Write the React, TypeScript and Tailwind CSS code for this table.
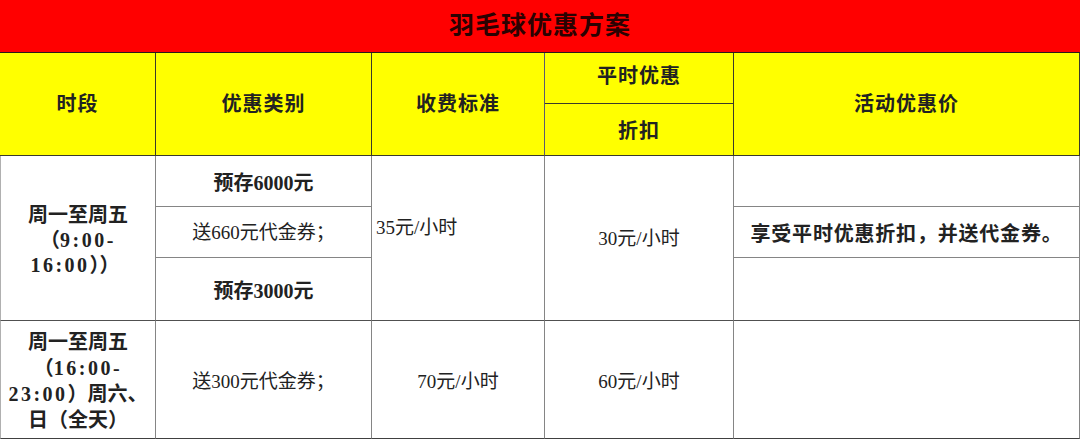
import React from "react";

const hb = "border-r border-b border-[#3a3a2a]";
const bb = "border-r border-b border-[#858585]";
const ctr = "flex items-center justify-center text-center";

export default function App() {
  return (
    <div
      className="w-[1080px] h-[440px] bg-white overflow-hidden"
      style={{ fontFamily: '"Liberation Serif", "Noto Sans CJK SC", serif' }}
    >
      <div className="grid grid-cols-[156px_216px_173px_189px_346px] grid-rows-[53px_51px_52px_51px_51px_63px_118px] text-[#222]">
        {/* title */}
        <div className={`col-start-1 col-span-5 row-start-1 bg-[#ff0000] border-b border-[#2a1a1a] ${ctr} text-[25px] font-bold tracking-[1px] text-[#2a0202]`}>
          羽毛球优惠方案
        </div>

        {/* header */}
        <div className={`col-start-1 row-start-2 row-span-2 bg-[#ffff00] ${hb} ${ctr} text-[20px] font-bold tracking-[1px]`}>时段</div>
        <div className={`col-start-2 row-start-2 row-span-2 bg-[#ffff00] ${hb} ${ctr} text-[20px] font-bold tracking-[1px]`}>优惠类别</div>
        <div className={`col-start-3 row-start-2 row-span-2 bg-[#ffff00] ${hb} border-r-[#5a5a70] ${ctr} text-[20px] font-bold tracking-[1px]`}>收费标准</div>
        <div className={`col-start-4 row-start-2 bg-[#ffff00] ${hb} ${ctr} text-[20px] font-bold tracking-[1px] pb-[4px]`}>平时优惠</div>
        <div className={`col-start-4 row-start-3 bg-[#ffff00] ${hb} ${ctr} text-[20px] font-bold tracking-[1px] pt-[3px]`}>折扣</div>
        <div className={`col-start-5 row-start-2 row-span-2 bg-[#ffff00] ${hb} ${ctr} text-[20px] font-bold tracking-[1px]`}>活动优惠价</div>

        {/* body row 1 */}
        <div className={`col-start-1 row-start-4 row-span-3 border-l border-l-[#b0b0b0] ${bb} border-b-[#505050] ${ctr} text-[20px] font-bold leading-[25px] pt-[4px]`}>
          <div>
            周一至周五
            <br />
            （<span className="tracking-[2.5px]">9:00-</span>
            <br />
            <span className="pr-[6px]">
              <span className="tracking-[2.5px]">16:00</span>））
            </span>
          </div>
        </div>
        <div className={`col-start-2 row-start-4 ${bb} ${ctr} text-[20px] font-bold pt-[3px]`}>预存6000元</div>
        <div className={`col-start-3 row-start-4 row-span-3 ${bb} border-b-[#505050] flex items-center pl-[4px] pb-[20px] text-[19px]`}>35元/小时</div>
        <div className={`col-start-4 row-start-4 row-span-3 ${bb} border-b-[#505050] ${ctr} text-[19px] pt-[2px]`}>30元/小时</div>
        <div className={`col-start-5 row-start-4 ${bb}`}></div>

        <div className={`col-start-2 row-start-5 ${bb} ${ctr} text-[19px] pt-[3px]`}>送660元代金券；</div>
        <div className={`col-start-5 row-start-5 ${bb} ${ctr} text-[20px] font-bold tracking-[0.8px] pt-[3px]`}>享受平时优惠折扣，并送代金券。</div>

        <div className={`col-start-2 row-start-6 ${bb} border-b-[#505050] ${ctr} text-[20px] font-bold pt-[3px]`}>预存3000元</div>
        <div className={`col-start-5 row-start-6 ${bb} border-b-[#505050]`}></div>

        {/* body row 2 */}
        <div className={`col-start-1 row-start-7 border-l border-l-[#b0b0b0] ${bb} border-b-[#404040] ${ctr} text-[20px] font-bold leading-[26px] pt-[2px]`}>
          <div>
            周一至周五
            <br />
            （<span className="tracking-[2.5px]">16:00-</span>
            <br />
            <span className="tracking-[2.5px]">23:00</span>）周六、
            <br />
            日（全天）
          </div>
        </div>
        <div className={`col-start-2 row-start-7 ${bb} border-b-[#404040] ${ctr} text-[19px] pt-[6px]`}>送300元代金券；</div>
        <div className={`col-start-3 row-start-7 ${bb} border-b-[#404040] ${ctr} text-[19px] pt-[6px]`}>70元/小时</div>
        <div className={`col-start-4 row-start-7 ${bb} border-b-[#404040] ${ctr} text-[19px] pt-[6px]`}>60元/小时</div>
        <div className={`col-start-5 row-start-7 ${bb} border-b-[#404040]`}></div>
      </div>
    </div>
  );
}
